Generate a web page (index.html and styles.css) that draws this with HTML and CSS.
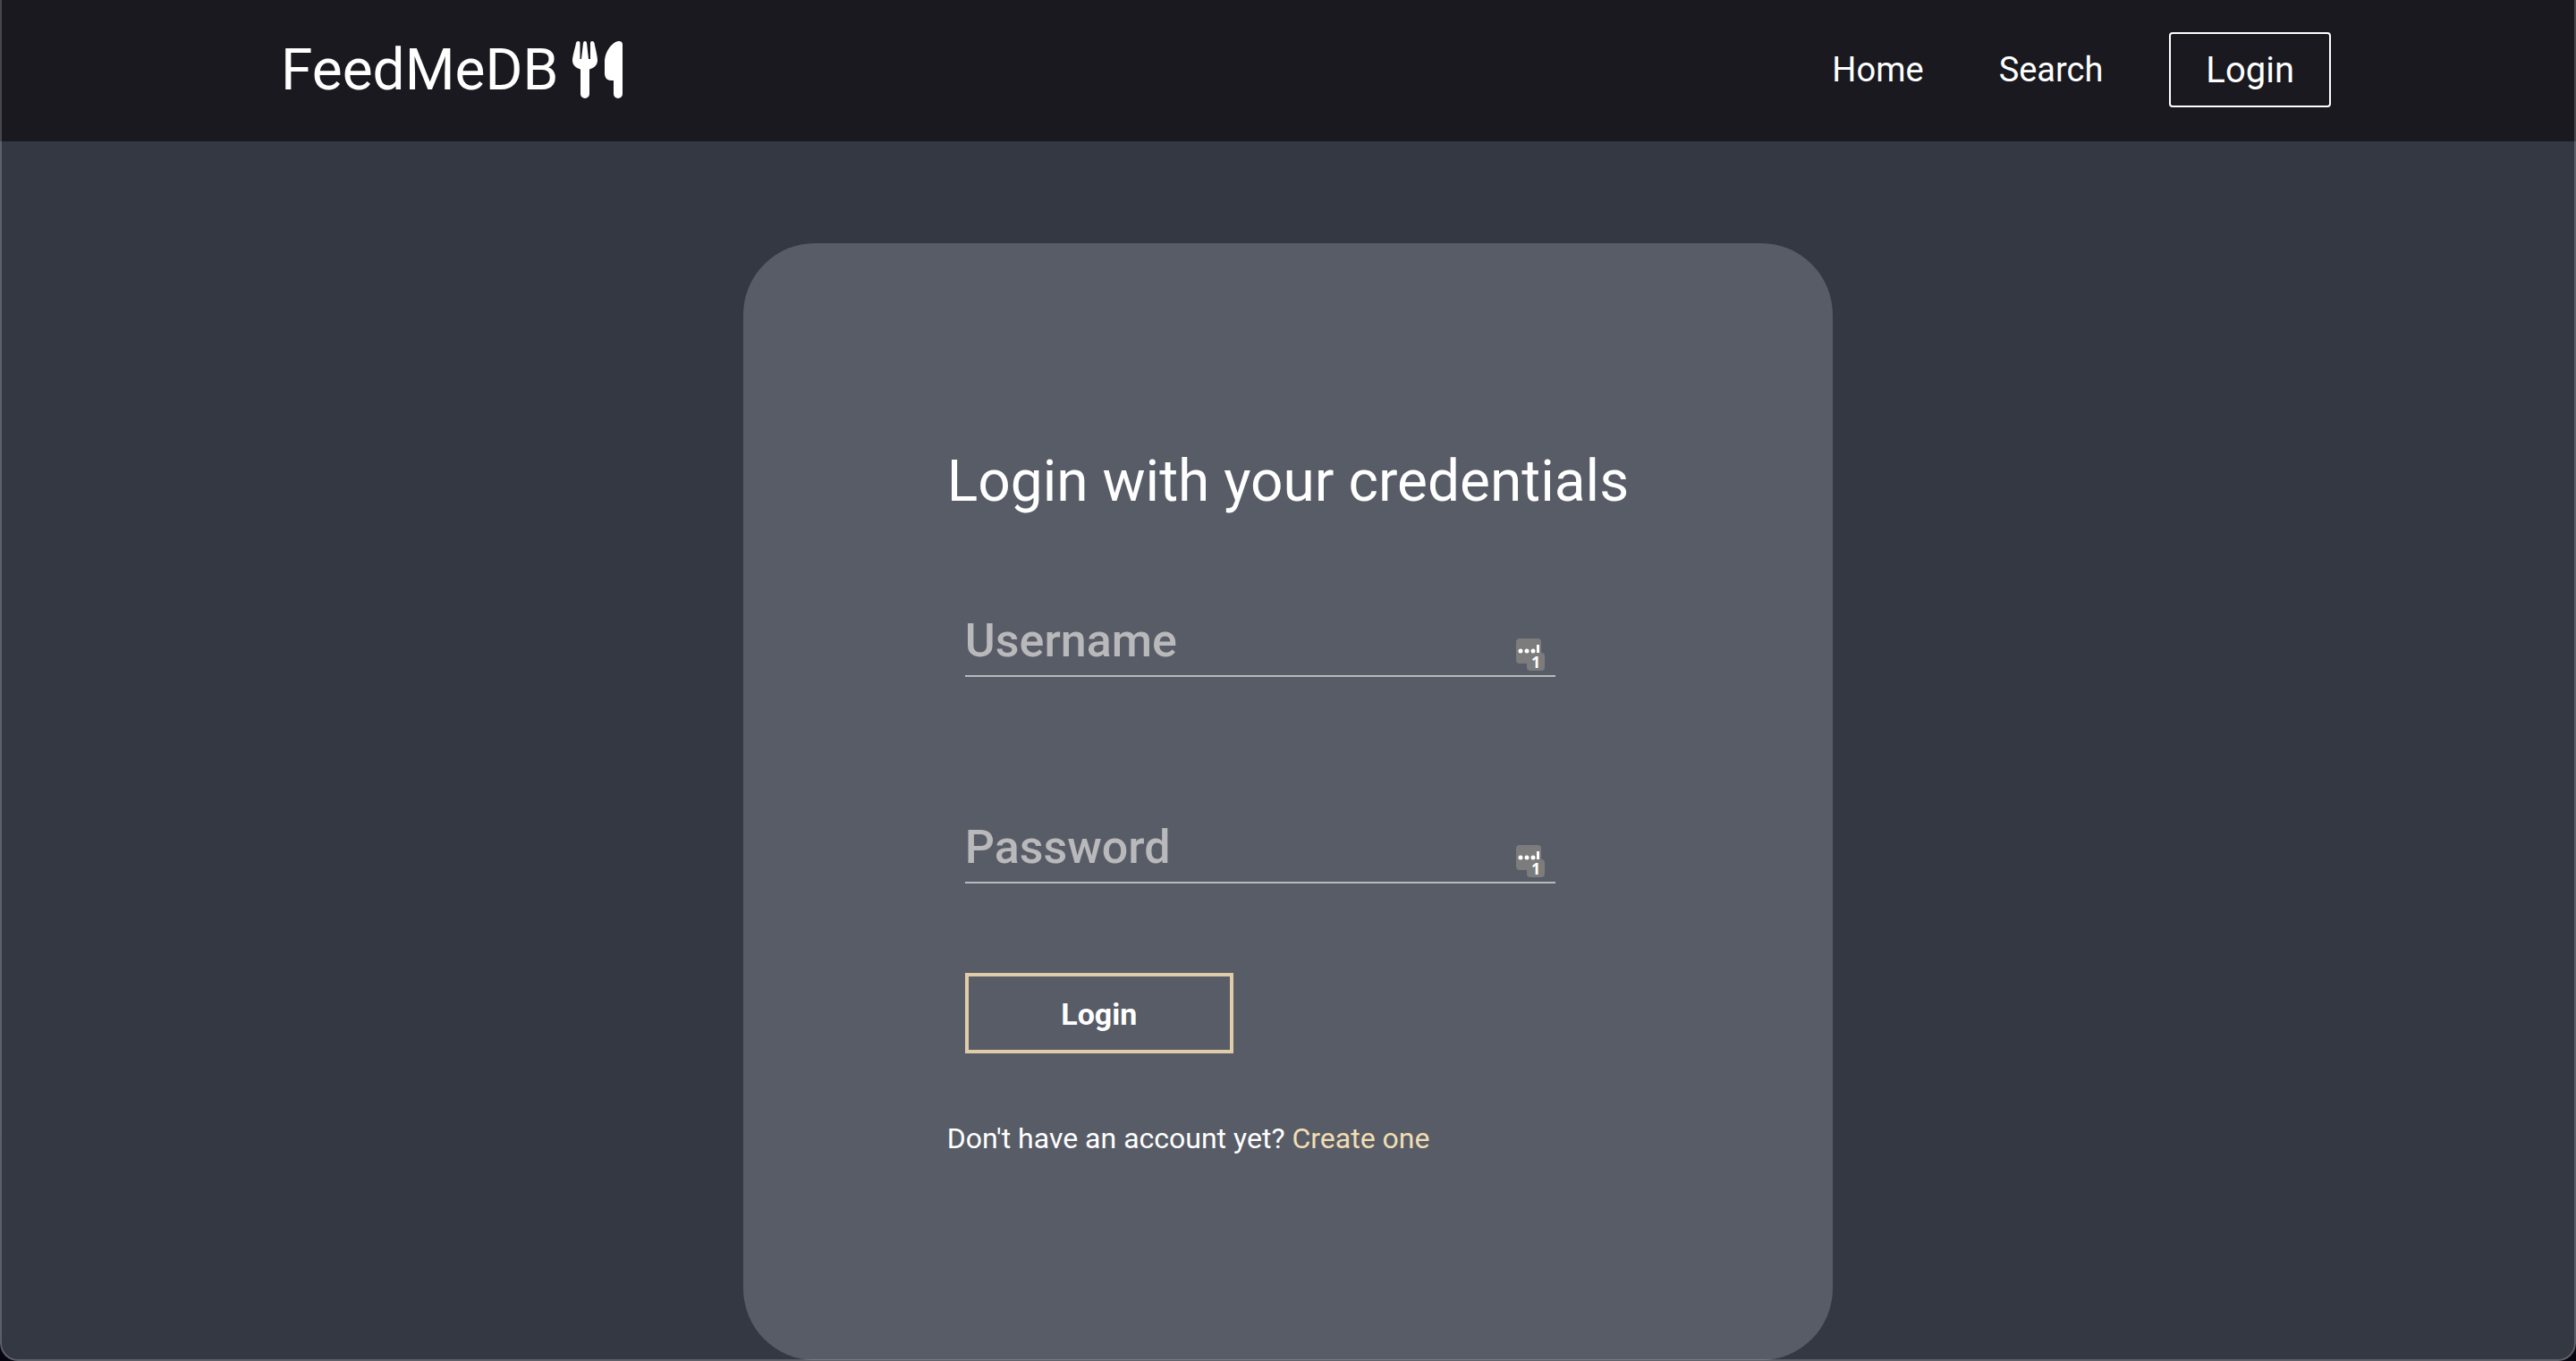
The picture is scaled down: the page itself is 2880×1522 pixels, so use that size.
FILE: index.html
```html
<!DOCTYPE html>
<html lang="en">
<head>
<meta charset="utf-8">
<meta name="viewport" content="width=device-width, initial-scale=1">
<title>FeedMeDB</title>
<link rel="stylesheet" href="styles.css">
</head>
<body>
<div class="window">
  <header class="header">
    <a class="brand" href="#">FeedMeDB
      <svg class="brand-icon" viewBox="0 0 56 64" aria-hidden="true">
        <path d="M4 2Q4.500 0 6.500 0Q8.500 0 8.500 2V20H10L12 2Q12.200 0 14 0Q15.800 0 16 2L18 20H20V2Q20 0 22 0Q24 0 24.500 2C25.500 8 28 17 28 21.500C28 26.500 24.500 30 19 31.500V59A5 5 0 0 1 9 59V31.500C3.500 30 0 26.500 0 21.500C0 17 3 8 4 2Z"/>
        <path d="M52 0Q56 0 56 4V59A5 5 0 0 1 46 59V44H43C39 44 36 41 36 36V24C36 10 46 0 52 0Z"/>
      </svg>
    </a>
    <nav class="nav">
      <a href="#">Home</a>
      <a href="#">Search</a>
      <a class="nav-login" href="#">Login</a>
    </nav>
  </header>
  <main class="main">
    <section class="card">
      <h1 class="title">Login with your credentials</h1>
      <form class="form">
        <div class="field">
          <input class="input" type="text" placeholder="Username" aria-label="Username">
          <svg class="key" viewBox="0 0 32 36" aria-hidden="true">
            <rect class="key-box" width="28" height="28" rx="4"/>
            <rect class="key-box" x="12" y="16" width="20" height="20" rx="4"/>
            <circle cx="5" cy="14" r="2.500"/><circle cx="12" cy="14" r="2.500"/><circle cx="19" cy="14" r="2.500"/>
            <rect x="23" y="7" width="3" height="9"/>
            <text x="17" y="33">1</text>
          </svg>
        </div>
        <div class="field">
          <input class="input" type="password" placeholder="Password" aria-label="Password">
          <svg class="key" viewBox="0 0 32 36" aria-hidden="true">
            <rect class="key-box" width="28" height="28" rx="4"/>
            <rect class="key-box" x="12" y="16" width="20" height="20" rx="4"/>
            <circle cx="5" cy="14" r="2.500"/><circle cx="12" cy="14" r="2.500"/><circle cx="19" cy="14" r="2.500"/>
            <rect x="23" y="7" width="3" height="9"/>
            <text x="17" y="33">1</text>
          </svg>
        </div>
        <button class="submit" type="submit">Login</button>
      </form>
      <p class="note">Don't have an account yet? <a href="#">Create one</a></p>
    </section>
  </main>
</div>
</body>
</html>
```

FILE: styles.css
```css
* { box-sizing: border-box; }

body {
  margin: 0;
  background: #05060f;
  color: #fff;
  font-family: Roboto, sans-serif;
}

a { color: inherit; text-decoration: none; }

.window {
  position: relative;
  min-height: 100vh;
  background: #343842;
  border-radius: 0 0 20px 20px;
  overflow: hidden;
}

/* thin light edge of the window, over header and content */
.window::after {
  content: "";
  position: absolute;
  inset: 0;
  border: 2px solid rgba(255, 255, 255, 0.2);
  border-top: 0;
  border-radius: 0 0 20px 20px;
  pointer-events: none;
}

.header {
  display: flex;
  align-items: center;
  justify-content: space-between;
  height: 158px;
  padding: 0 274px 2px 314px;
  background: #1a191f;
}

.brand {
  display: flex;
  align-items: center;
  gap: 16px;
  font-size: 64px;
}

.brand-icon {
  width: 56px;
  height: 64px;
  fill: #fff;
}

.nav {
  display: flex;
  align-items: center;
  font-size: 38px;
}

.nav a { margin-left: 84px; }

.nav .nav-login {
  margin-left: 74px;
  padding: 2px 39px 0;
  border: 2px solid #fff;
  border-radius: 4px;
  font-size: 40px;
  line-height: 78px;
}

.main {
  display: flex;
  justify-content: center;
  padding-top: 114px;
}

.card {
  padding: 229px 228px 228px;
  border-radius: 80px;
  background: #585c67;
}

.title {
  margin: 0;
  font-size: 64px;
  font-weight: 400;
  line-height: 76px;
}

.form {
  width: 660px;
  margin: 79px 20px 0;
}

.field {
  position: relative;
  margin-bottom: 130px;
}

.field + .field { margin-bottom: 100px; }

.input {
  display: block;
  width: 100%;
  height: 101px;
  padding: 22px 60px 0 0;
  border: 0;
  border-bottom: 2px solid #b9babd;
  outline: 0;
  background: transparent;
  color: #fff;
  font: 500 52px Roboto, sans-serif;
}

.input::placeholder { color: #b9b9bb; opacity: 1; }

.key {
  position: absolute;
  right: 12px;
  bottom: 7px;
  width: 32px;
  height: 36px;
  overflow: visible;
  fill: #fff;
}

.key-box { fill: #7c7c7c; }

.key text { font: 700 18px "Noto Sans", sans-serif; }

.submit {
  display: block;
  width: 300px;
  height: 90px;
  padding: 2px 0 0;
  border: 4px solid #decda8;
  background: transparent;
  color: #fff;
  font: 700 34px Roboto, sans-serif;
}

.note {
  margin: 75px 0 0;
  font-size: 32px;
  line-height: 40px;
}

.note a { color: #f1deb3; }
```
